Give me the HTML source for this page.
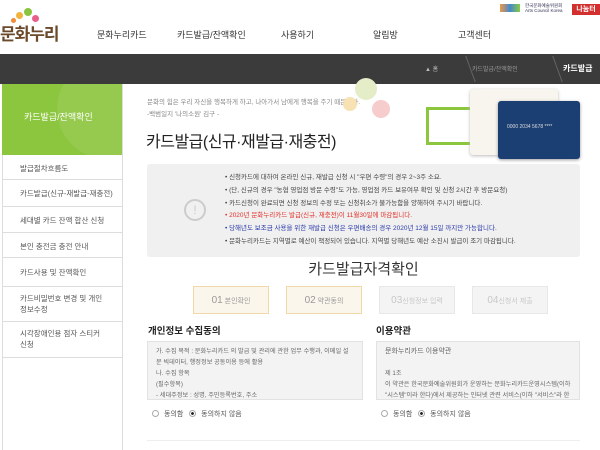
<!DOCTYPE html>
<html><head><meta charset="utf-8">
<style>
*{margin:0;padding:0;box-sizing:border-box}
body{width:600px;height:450px;overflow:hidden;background:#fff;font-family:"Liberation Sans","Noto Sans CJK KR",sans-serif;color:#333;position:relative}
.a{position:absolute}
.nav{font-size:9px;color:#333;top:28px}
.side div{position:absolute;left:2px;width:120px;border-bottom:1px solid #ddd;font-size:7.5px;color:#555;padding-left:18px;line-height:11px}
.notice p{font-size:6.5px;line-height:12.8px;color:#444}
.step{position:absolute;top:286px;width:76px;height:28px;border:1px solid #e8e8e8;background:#f4f4f4;color:#c8c8c8;font-size:7px;text-align:center;line-height:27px}
.step.on{background:#fbf6ec;border-color:#f0d8a8;color:#999}
.step b{font-size:10px;font-weight:normal}
.ta{position:absolute;top:341px;height:59px;background:#f3f3f3;border:1px solid #e2e2e2;font-size:6.2px;color:#666;line-height:11px;padding:4px 8px;overflow:hidden}
.rad{position:absolute;top:409px;font-size:7px;color:#555}
.rad i{display:inline-block;width:7px;height:7px;border:1px solid #aaa;border-radius:50%;vertical-align:-1px;margin-right:5px}
.rad i.s{background:radial-gradient(#222 35%,#fff 45%)}
</style></head><body>
<div class="a" style="left:10px;top:6px;width:30px;height:18px">
<span class="a" style="left:6px;top:6px;width:7px;height:7px;border-radius:50%;background:#f2b33d"></span>
<span class="a" style="left:14px;top:2px;width:8px;height:8px;border-radius:50%;background:#8bc53f"></span>
<span class="a" style="left:22px;top:9px;width:7px;height:7px;border-radius:50%;background:#e8608a"></span>
<span class="a" style="left:1px;top:12px;width:5px;height:5px;border-radius:50%;background:#f08c3a"></span>
</div>
<div class="a" style="left:0;top:20px;font-size:17px;font-weight:bold;color:#6b4a2b;letter-spacing:-1px">문화누리</div>
<div class="a nav" style="left:97px">문화누리카드</div>
<div class="a nav" style="left:177px">카드발급/잔액확인</div>
<div class="a nav" style="left:281px">사용하기</div>
<div class="a nav" style="left:373px">알림방</div>
<div class="a nav" style="left:458px">고객센터</div>
<div class="a" style="left:500px;top:4px;width:20px;height:8px;background:linear-gradient(90deg,#e94,#48c,#8c4)"></div>
<div class="a" style="left:525px;top:3px;font-size:4.5px;color:#335;line-height:5px">한국문화예술위원회<br>Arts Council Korea</div>
<div class="a" style="left:572px;top:4px;width:28px;height:11px;background:#d32f2f;color:#fff;font-size:7px;font-weight:bold;text-align:center;line-height:11px">나눔터</div>
<div class="a" style="left:0;top:54px;width:600px;height:30px;background:#3b3b3b"></div>
<div class="a" style="left:425px;top:64px;font-size:6px;color:#bbb">&#9650; 홈</div>
<div class="a" style="left:453px;top:56px;width:18px;height:26px;border-right:1px solid #666;transform:skewX(20deg)"></div>
<div class="a" style="left:472px;top:64px;font-size:6px;color:#999">카드발급/잔액확인</div>
<div class="a" style="left:540px;top:56px;width:18px;height:26px;border-right:1px solid #666;transform:skewX(20deg)"></div>
<div class="a" style="left:563px;top:63px;font-size:8px;color:#fff;font-weight:bold">카드발급</div>
<div class="a" style="left:0;top:84px;width:123px;height:366px;border-right:1px solid #ddd"></div>
<div class="a" style="left:2px;top:155px;width:1px;height:295px;background:#ddd"></div>
<div class="a" style="left:2px;top:84px;width:120px;height:71px;background:#8cc63f;overflow:hidden">
<div class="a" style="left:55px;top:-25px;width:100px;height:100px;border-radius:50%;background:rgba(255,255,255,.08)"></div>
<div class="a" style="left:22px;top:26px;font-size:9px;color:#fff">카드발급/잔액확인</div></div>
<div class="side">
<div style="top:155px;height:25px;padding-top:8px">발급절차흐름도</div>
<div style="top:180px;height:27px;padding-top:8px">카드발급(신규-재발급-재충전)</div>
<div style="top:207px;height:26px;padding-top:8px">세대별 카드 잔액 합산 신청</div>
<div style="top:233px;height:25px;padding-top:8px">본인 충전금 충전 안내</div>
<div style="top:258px;height:29px;padding-top:9px">카드사용 및 잔액확인</div>
<div style="top:287px;height:35px;padding-top:6px">카드비밀번호 변경 및 개인<br>정보수정</div>
<div style="top:322px;height:36px;padding-top:6px">시각장애인용 점자 스티커<br>신청</div>
</div>
<div class="a" style="left:147px;top:97px;font-size:6.5px;color:#888;line-height:12px">문화의 힘은 우리 자신을 행복하게 하고, 나아가서 남에게 행복을 주기 때문이다.<br>-백범일지 '나의소원' 김구 -</div>
<div class="a" style="left:146px;top:128px;font-size:16px;color:#222;letter-spacing:-.5px">카드발급(신규·재발급·재충전)</div>
<div class="a" style="left:355px;top:78px;width:22px;height:22px;border-radius:50%;background:#e4ecc8"></div>
<div class="a" style="left:343px;top:97px;width:14px;height:14px;border-radius:50%;background:#f8e2b4"></div>
<div class="a" style="left:372px;top:100px;width:18px;height:18px;border-radius:50%;background:#f6cccc"></div>
<div class="a" style="left:426px;top:107px;width:55px;height:38px;border:3px solid #8cc63f;background:#fff"></div>
<div class="a" style="left:470px;top:89px;width:88px;height:66px;background:#f7f5ee;border-radius:3px;box-shadow:0 1px 3px #bbb"></div>
<div class="a" style="left:498px;top:101px;width:82px;height:58px;background:#1c3f73;border-radius:3px;box-shadow:0 1px 3px #999"></div>
<div class="a" style="left:507px;top:124px;font-size:5px;color:#ddd">0000 2034 5678 ****</div>
<div class="a notice" style="left:147px;top:164px;width:433px;height:93px;background:#f0f0f0;border-radius:3px">
<div class="a" style="left:37px;top:35px;width:22px;height:22px;border:2px solid #ccc;border-radius:50%;text-align:center;line-height:18px;color:#ccc;font-size:12px">!</div>
<div class="a" style="left:78px;top:8px">
<p>• 신청카드에 대하여 온라인 신규, 재발급 신청 시 "우편 수령"의 경우 2~3주 소요.</p>
<p>• (단, 신규의 경우 "농협 영업점 방문 수령"도 가능, 영업점 카드 보유여부 확인 및 신청 2시간 후 방문요청)</p>
<p>• 카드신청이 완료되면 신청 정보의 수정 또는 신청취소가 불가능함을 양해하여 주시기 바랍니다.</p>
<p style="color:#e0302a">• 2020년 문화누리카드 발급(신규, 재충전)이 11월30일에 마감됩니다.</p>
<p style="color:#2a3aa8">• 당해년도 보조금 사용을 위한 재발급 신청은 우편배송의 경우 2020년 12월 15일 까지만 가능합니다.</p>
<p>• 문화누리카드는 지역별로 예산이 책정되어 있습니다. 지역별 당해년도 예산 소진시 발급이 조기 마감됩니다.</p>
</div></div>
<div class="a" style="left:147px;top:258px;width:433px;text-align:center;font-size:15px;color:#333">카드발급자격확인</div>
<div class="step on" style="left:193px"><b>01</b> 본인확인</div>
<div class="step on" style="left:286px"><b>02</b> 약관동의</div>
<div class="step" style="left:379px"><b>03</b>신청정보 입력</div>
<div class="step" style="left:472px"><b>04</b>신청서 제출</div>
<div class="a" style="left:148px;top:323px;font-size:9.5px;color:#222;font-weight:bold">개인정보 수집동의</div>
<div class="a" style="left:376px;top:323px;font-size:9.5px;color:#222;font-weight:bold">이용약관</div>
<div class="ta" style="left:147px;width:216px">가. 수집 목적 : 문화누리카드 의 발급 및 관리에 관한 업무 수행과, 이메일 설문 빅데이터, 행정정보 공동이용 등에 활용<br>나. 수집 항목<br>(필수항목)<br>- 세대주정보 : 성명, 주민등록번호, 주소</div>
<div class="ta" style="left:376px;width:204px"><span style="font-size:7px">문화누리카드 이용약관</span><br><br>제 1조<br>이 약관은 한국문화예술위원회가 운영하는 문화누리카드운영시스템(이하 "시스템"이라 한다)에서 제공하는 인터넷 관련 서비스(이하 "서비스"라 한다)를 이용함에</div>
<div class="rad" style="left:152px"><i></i>동의함 &nbsp;&nbsp;<i class="s"></i>동의하지 않음</div>
<div class="rad" style="left:381px"><i></i>동의함 &nbsp;&nbsp;<i class="s"></i>동의하지 않음</div>
<div class="a" style="left:147px;top:440px;width:433px;border-top:1px solid #eee"></div>
</body></html>
